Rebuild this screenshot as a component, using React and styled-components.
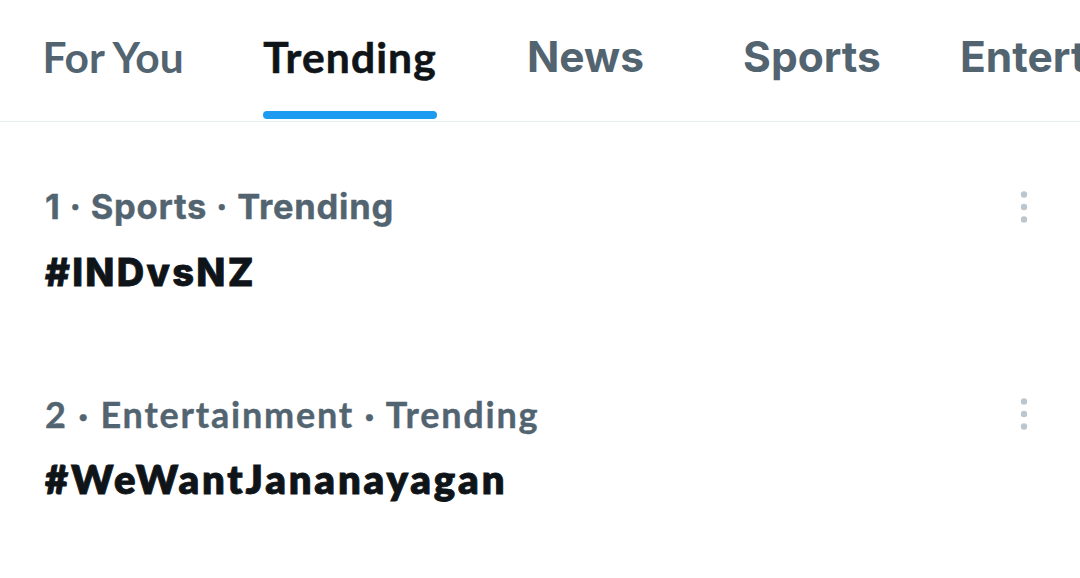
import React from 'react';
import styled, { createGlobalStyle } from 'styled-components';

const GlobalStyle = createGlobalStyle`
  html, body {
    margin: 0;
    padding: 0;
    background: #fff;
  }
  body {
    font-family: 'Inter', 'Noto Sans', sans-serif;
    -webkit-font-smoothing: antialiased;
  }
`;

const fonts = {
  lato: `'Lato', 'Noto Sans', sans-serif`,
  inter: `'Inter', 'Noto Sans', sans-serif`,
};

const Page = styled.div`
  width: 1080px;
  height: 578px;
  overflow: hidden;
  background: #fff;
`;

const TabBar = styled.nav`
  display: flex;
  height: 121px;
  border-bottom: 1px solid #e7ecef;
  white-space: nowrap;
  overflow: hidden;
`;

const Tab = styled.div`
  flex: 0 0 ${(p) => p.$w || 'auto'};
  display: flex;
  flex-direction: column;
  align-items: ${(p) => (p.$start ? 'flex-start' : 'center')};
  padding-top: 31px;
  padding-left: ${(p) => p.$pl || 0};
  box-sizing: border-box;
`;

const TabLabel = styled.div`
  display: flex;
  flex-direction: column;
  height: 100%;
  font-family: ${(p) => fonts[p.$font]};
  font-size: 42.5px;
  line-height: 51px;
  font-weight: 700;
  letter-spacing: ${(p) => (p.$active ? '1.15px' : '0')};
  -webkit-text-stroke: ${(p) => (p.$active ? '0.6px #0f1419' : '0')};
  color: ${(p) => (p.$active ? '#0f1419' : '#536471')};
`;

const Indicator = styled.span`
  display: block;
  margin-top: auto;
  margin-bottom: 2px;
  height: 8px;
  border-radius: 4px;
  background: #1d9bf0;
`;

const Row = styled.div`
  display: flex;
  flex-direction: column;
  gap: 17px;
  padding: 62px 44px 32px 45px;
`;

const MetaLine = styled.div`
  display: flex;
  align-items: center;
  justify-content: space-between;
  height: 46px;
`;

const Meta = styled.span`
  font-family: ${(p) => fonts[p.$font]};
  font-size: ${(p) => (p.$font === 'lato' ? '36px' : '34.5px')};
  line-height: 46px;
  font-weight: 700;
  letter-spacing: ${(p) => (p.$font === 'lato' ? '1.8px' : '0.75px')};
  -webkit-text-stroke: 0.4px #536471;
  color: #536471;
`;

const Hashtag = styled.div`
  font-family: ${(p) => fonts[p.$font]};
  font-size: ${(p) => (p.$font === 'lato' ? '40px' : '38px')};
  line-height: 50px;
  font-weight: 800;
  letter-spacing: ${(p) => (p.$font === 'lato' ? '2.85px' : '2.3px')};
  -webkit-text-stroke: 0.8px #0f1419;
  color: #0f1419;
`;

const MoreButton = styled.button`
  display: flex;
  align-items: center;
  justify-content: center;
  width: 24px;
  height: 46px;
  padding: 0;
  border: 0;
  background: none;
`;

const MoreIcon = () => (
  <svg width="24" height="40" viewBox="0 0 24 40">
    <circle cx="12" cy="7.5" r="3.2" fill="#bcc6ce" />
    <circle cx="12" cy="20" r="3.2" fill="#bcc6ce" />
    <circle cx="12" cy="32.5" r="3.2" fill="#bcc6ce" />
  </svg>
);

const tabs = [
  { label: 'For You', w: '226px', font: 'lato' },
  { label: 'Trending', w: '248px', font: 'lato', active: true },
  { label: 'News', w: '223px', font: 'inter' },
  { label: 'Sports', w: '230px', font: 'inter' },
  { label: 'Entertainment', font: 'inter', start: true, pl: '33px' },
];

const trends = [
  { meta: '1 · Sports · Trending', tag: '#INDvsNZ', font: 'inter' },
  { meta: '2 · Entertainment · Trending', tag: '#WeWantJananayagan', font: 'lato' },
];

const App = () => {
  return (
    <Page>
      <GlobalStyle />
      <TabBar>
        {tabs.map((t) => (
          <Tab key={t.label} $w={t.w} $start={t.start} $pl={t.pl}>
            <TabLabel $font={t.font} $active={t.active}>
              {t.label}
              {t.active && <Indicator />}
            </TabLabel>
          </Tab>
        ))}
      </TabBar>
      {trends.map((t) => (
        <Row key={t.tag}>
          <MetaLine>
            <Meta $font={t.font}>{t.meta}</Meta>
            <MoreButton aria-label="More">
              <MoreIcon />
            </MoreButton>
          </MetaLine>
          <Hashtag $font={t.font}>{t.tag}</Hashtag>
        </Row>
      ))}
    </Page>
  );
};

export default App;
